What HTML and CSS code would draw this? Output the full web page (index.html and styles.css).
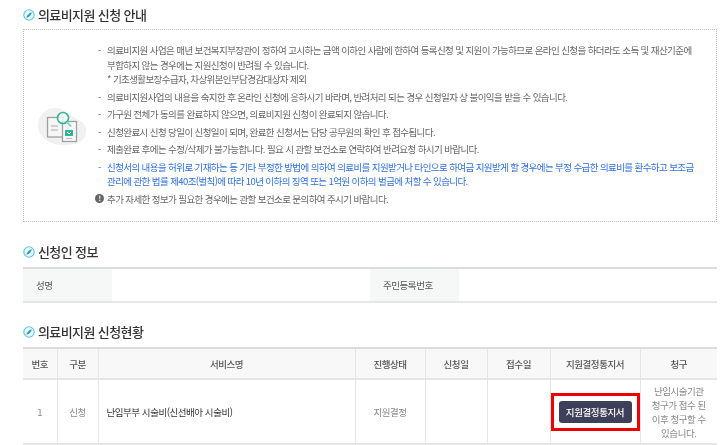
FILE: index.html
```html
<!DOCTYPE html>
<html lang="ko">
<head>
  <meta charset="UTF-8">
  <title>의료비지원 신청</title>
  <link rel="stylesheet" href="styles.css">
</head>
<body>

<h2 class="title">
  <svg class="title-icon" viewBox="0 0 12 12"><circle cx="6" cy="6" r="5.2" fill="#eaf8fb" stroke="#62c6dc" stroke-width="1.1"/><path d="M3.4 8.800C3.800 6.200 5.800 4 8.800 3.200 8.400 5.800 6.400 8 3.400 8.800Z" fill="#1f9fc0"/></svg>
  의료비지원 신청 안내
</h2>
<div class="guide">
  <div class="guide-icon">
    <svg viewBox="0 0 52 40" width="52" height="40">
      <path d="M1 20C1 8 10 1 20 2c8 1 12 8 20 11 7 3 10 8 9 14-1 8-10 12-20 12C15 40 1 32 1 20Z" fill="#f1f1f1"/>
      <rect x="10.500" y="11.500" width="15.500" height="19.500" fill="#f6f6f6" stroke="#a0a0a0" stroke-width="1.300"/>
      <path d="M14 20h7M14 24h7" stroke="#aaa" stroke-width="1"/>
      <rect x="25.500" y="15.500" width="14" height="20" fill="#f8f8f8" stroke="#a0a0a0" stroke-width="1.300"/>
      <rect x="28" y="24" width="8" height="6" fill="#2fb59a"/>
      <path d="M30 26l2 1.800 2-1.800" fill="none" stroke="#fff" stroke-width="1"/>
      <path d="M29 32.500h6" stroke="#bbb" stroke-width="1"/>
      <circle cx="26" cy="12" r="5.500" fill="#fff" fill-opacity=".7" stroke="#2fb59a" stroke-width="1.600"/>
      <path d="M30 16l4 4.500" stroke="#8fd5c5" stroke-width="2.200"/>
    </svg>
  </div>
  <div class="guide-text">
    <ul class="guide-list">
      <li>의료비지원 사업은 매년 보건복지부장관이 정하여 고시하는 금액 이하인 사람에 한하여 등록신청 및 지원이 가능하므로 온라인 신청을 하더라도 소득 및 재산기준에 부합하지 않는 경우에는 지원신청이 반려될 수 있습니다.<br>* 기초생활보장수급자, 차상위본인부담경감대상자 제외</li>
      <li>의료비지원사업의 내용을 숙지한 후 온라인 신청에 응하시기 바라며, 반려처리 되는 경우 신청일자 상 불이익을 받을 수 있습니다.</li>
      <li>가구원 전체가 동의를 완료하지 않으면, 의료비지원 신청이 완료되지 않습니다.</li>
      <li>신청완료시 신청 당일이 신청일이 되며, 완료한 신청서는 담당 공무원의 확인 후 접수됩니다.</li>
      <li>제출완료 후에는 수정/삭제가 불가능합니다. 필요 시 관할 보건소로 연락하여 반려요청 하시기 바랍니다.</li>
      <li class="warn">신청서의 내용을 허위로 기재하는 등 기타 부정한 방법에 의하여 의료비를 지원받거나 타인으로 하여금 지원받게 할 경우에는 부정 수급한 의료비를 환수하고 보조금 관리에 관한 법률 제40조(벌칙)에 따라 10년 이하의 징역 또는 1억원 이하의 벌금에 처할 수 있습니다.</li>
    </ul>
    <p class="guide-note"><span class="note-mark">!</span>추가 자세한 정보가 필요한 경우에는 관할 보건소로 문의하여 주시기 바랍니다.</p>
  </div>
</div>

<h2 class="title title-next">
  <svg class="title-icon" viewBox="0 0 12 12"><circle cx="6" cy="6" r="5.2" fill="#eaf8fb" stroke="#62c6dc" stroke-width="1.1"/><path d="M3.4 8.800C3.800 6.200 5.800 4 8.800 3.200 8.400 5.800 6.400 8 3.400 8.800Z" fill="#1f9fc0"/></svg>
  신청인 정보
</h2>
<table class="info">
  <tr>
    <th class="info-th1">성명</th>
    <td class="info-td1"></td>
    <th class="info-th2">주민등록번호</th>
    <td></td>
  </tr>
</table>

<h2 class="title title-status">
  <svg class="title-icon" viewBox="0 0 12 12"><circle cx="6" cy="6" r="5.2" fill="#eaf8fb" stroke="#62c6dc" stroke-width="1.1"/><path d="M3.4 8.800C3.800 6.200 5.800 4 8.800 3.200 8.400 5.800 6.400 8 3.400 8.800Z" fill="#1f9fc0"/></svg>
  의료비지원 신청현황
</h2>
<table class="status">
  <colgroup>
    <col class="c-no"><col class="c-type"><col class="c-name"><col class="c-state"><col class="c-date"><col class="c-date2"><col class="c-doc"><col class="c-claim">
  </colgroup>
  <thead>
    <tr>
      <th>번호</th><th>구분</th><th>서비스명</th><th>진행상태</th><th>신청일</th><th>접수일</th><th>지원결정통지서</th><th>청구</th>
    </tr>
  </thead>
  <tbody>
    <tr>
      <td>1</td>
      <td>신청</td>
      <td class="service">난임부부 시술비(신선배아 시술비)</td>
      <td>지원결정</td>
      <td></td>
      <td></td>
      <td class="doc"><div class="doc-mark"><button class="doc-btn">지원결정통지서</button></div></td>
      <td class="claim">난임시술기관 청구가 접수 된 이후 청구할 수 있습니다.</td>
    </tr>
  </tbody>
</table>

</body>
</html>
```

FILE: styles.css
```css
body {
  margin: 0;
  padding: 6px 4px 0 23px;
  font-family: "Noto Sans CJK KR", "Noto Sans", sans-serif;
  color: #666;
  background: #fff;
  overflow: hidden;
  filter: blur(0.3px); /* reference is a soft upscaled capture */
}

.title {
  display: flex;
  align-items: center;
  gap: 3px;
  margin: 0;
  height: 17px;
  font-size: 13px;
  font-weight: 500;
  letter-spacing: -0.6px;
  color: #333;
}

.title-icon {
  width: 12px;
  height: 12px;
}

.title-next {
  margin-top: 21px;
  margin-bottom: 7px;
}

.title-status {
  margin-top: 20px;
  margin-bottom: 7px;
}

.guide {
  display: flex;
  box-sizing: border-box;
  height: 193px;
  margin-top: 6px;
  border: 1px dotted #bbb;
}

.guide-icon {
  display: flex;
  align-items: center;
  box-sizing: border-box;
  width: 70px;
  padding-left: 13px;
}

.guide-text {
  flex: 1;
  padding: 13px 20px 0 1px;
  font-size: 9.500px;
  line-height: 14.500px;
  letter-spacing: -0.6px;
  word-break: keep-all;
}

.guide-list {
  margin: 0;
  padding: 0;
  list-style: none;
}

.guide-list li {
  position: relative;
  margin-bottom: 3px;
  padding-left: 12px;
}

.guide-list li::before {
  content: "-";
  position: absolute;
  left: 3px;
}

.guide-list .warn {
  color: #2f6fdc;
}

.guide-note {
  display: flex;
  align-items: center;
  gap: 3px;
  margin: 0;
}

.note-mark {
  display: block;
  width: 9px;
  height: 9px;
  border-radius: 50%;
  background: #666;
  color: #fff;
  font-size: 7px;
  line-height: 9px;
  text-align: center;
  font-weight: 700;
}

table {
  width: 694px;
  border-collapse: collapse;
  table-layout: fixed;
  letter-spacing: -0.45px;
}

.info {
  border-top: 2px solid #dcdcdc;
  border-bottom: 2px solid #e6e6e6;
}

.info th,
.info td {
  height: 32px;
  padding: 0;
  font-size: 9.500px;
}

.info th {
  padding-left: 13px;
  font-weight: 400;
  text-align: left;
  color: #555;
  background: #f6f7f7;
}

.info-th1 {
  width: 76px;
}

.info-td1 {
  width: 258px;
}

.info-th2 {
  width: 76px;
}

.status {
  border-top: 2px solid #dcdcdc;
  border-bottom: 2px solid #e6e6e6;
}

.status th,
.status td {
  padding: 0;
  font-size: 9.500px;
  text-align: center;
  border-left: 1px solid #e6e6e6;
}

.status th:first-child,
.status td:first-child {
  border-left: none;
}

.status th {
  height: 29px;
  font-weight: 500;
  color: #555;
  background: #f8f8f8;
  border-bottom: 2px solid #e6e6e6;
}

.status td {
  height: 63px;
  line-height: 14px;
  color: #888;
}

.c-no { width: 34px; }
.c-type { width: 41px; }
.c-name { width: 257px; }
.c-state { width: 70px; }
.c-date { width: 62px; }
.c-date2 { width: 63px; }
.c-doc { width: 90px; }
.c-claim { width: 77px; }

.status .service {
  padding-left: 8px;
  text-align: left;
  color: #333;
}

.status .claim {
  padding: 0 9px;
}

.doc-mark {
  display: flex;
  align-items: center;
  justify-content: center;
  box-sizing: border-box;
  width: 89px;
  height: 38px;
  border: 3px solid #ee0000;
}

.doc-btn {
  width: 73px;
  height: 22px;
  padding: 0;
  font-family: inherit;
  font-size: 9.500px;
  font-weight: 500;
  letter-spacing: -0.4px;
  color: #fff;
  background: #3e3f58;
  border: none;
  border-radius: 3px;
}
```
